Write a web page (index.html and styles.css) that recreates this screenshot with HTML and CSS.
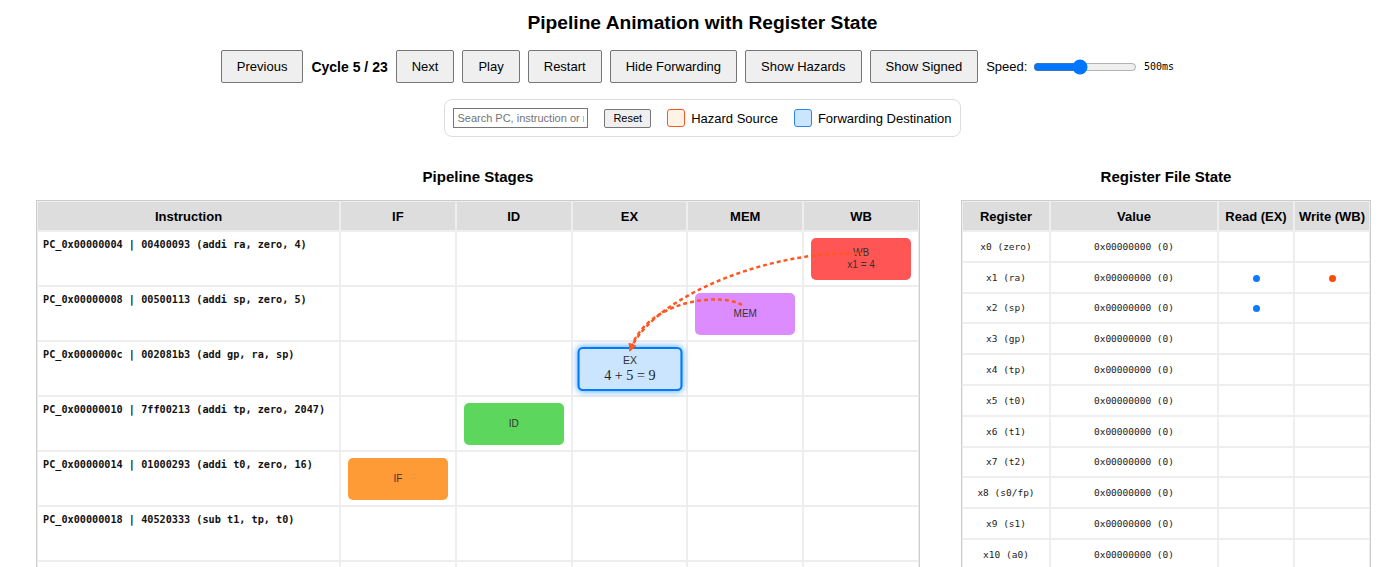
FILE: index.html
```html
<!DOCTYPE html>
<html lang="en">
<head>
<meta charset="utf-8">
<title>Pipeline Animation with Register State</title>
<link rel="stylesheet" href="styles.css">
</head>
<body>
<h1 class="title">Pipeline Animation with Register State</h1>

<div class="controls">
  <button class="btn">Previous</button>
  <span class="cycle">Cycle 5 / 23</span>
  <button class="btn">Next</button>
  <button class="btn">Play</button>
  <button class="btn">Restart</button>
  <button class="btn">Hide Forwarding</button>
  <button class="btn">Show Hazards</button>
  <button class="btn">Show Signed</button>
  <label class="speed">Speed: <input class="speed-range" type="range" min="100" max="1000" value="500"><span class="speed-val">500ms</span></label>
</div>

<div class="legend-row">
  <div class="legend">
    <input class="search" type="text" placeholder="Search PC, instruction or register">
    <button class="reset">Reset</button>
    <span class="legend-item"><span class="swatch swatch-hazard"></span>Hazard Source</span>
    <span class="legend-item"><span class="swatch swatch-fwd"></span>Forwarding Destination</span>
  </div>
</div>

<div class="main">
  <section class="pipeline">
    <h2 class="section-title">Pipeline Stages</h2>
    <div class="table-wrap">
      <table class="grid pipe-grid">
        <thead>
          <tr>
            <th class="col-instr">Instruction</th>
            <th>IF</th>
            <th>ID</th>
            <th>EX</th>
            <th>MEM</th>
            <th>WB</th>
          </tr>
        </thead>
        <tbody>
          <tr>
            <td class="instr">PC_0x00000004 | 00400093 (addi ra, zero, 4)</td>
            <td></td><td></td><td></td><td></td>
            <td><div class="stage stage-wb"><span>WB</span><span>x1 = 4</span></div></td>
          </tr>
          <tr>
            <td class="instr">PC_0x00000008 | 00500113 (addi sp, zero, 5)</td>
            <td></td><td></td><td></td>
            <td><div class="stage stage-mem"><span>MEM</span></div></td>
            <td></td>
          </tr>
          <tr>
            <td class="instr">PC_0x0000000c | 002081b3 (add gp, ra, sp)</td>
            <td></td><td></td>
            <td><div class="stage stage-ex"><span>EX</span><span class="calc">4 + 5 = 9</span></div></td>
            <td></td><td></td>
          </tr>
          <tr>
            <td class="instr">PC_0x00000010 | 7ff00213 (addi tp, zero, 2047)</td>
            <td></td>
            <td><div class="stage stage-id"><span>ID</span></div></td>
            <td></td><td></td><td></td>
          </tr>
          <tr>
            <td class="instr">PC_0x00000014 | 01000293 (addi t0, zero, 16)</td>
            <td><div class="stage stage-if"><span>IF</span></div></td>
            <td></td><td></td><td></td><td></td>
          </tr>
          <tr>
            <td class="instr">PC_0x00000018 | 40520333 (sub t1, tp, t0)</td>
            <td></td><td></td><td></td><td></td><td></td>
          </tr>
          <tr>
            <td class="instr">PC_0x0000001c | 00628393 (addi t2, t0, 6)</td>
            <td></td><td></td><td></td><td></td><td></td>
          </tr>
        </tbody>
      </table>
      <svg class="fwd" width="884" height="380" viewBox="0 0 884 380" aria-hidden="true">
        <defs>
          <marker id="arrow" markerWidth="8" markerHeight="8" refX="4" refY="4" orient="auto" markerUnits="userSpaceOnUse">
            <path d="M0,0 L8,4 L0,8 Z" fill="#ff5722"/>
          </marker>
        </defs>
        <path d="M 828 54 C 744 48, 622 92, 595 148" fill="none" stroke="#ff5722" stroke-width="2.5" stroke-dasharray="4 3" marker-end="url(#arrow)"/>
        <path d="M 706 105 C 684 92, 612 100, 595 148" fill="none" stroke="#ff5722" stroke-width="2.5" stroke-dasharray="4 3" marker-end="url(#arrow)"/>
      </svg>
    </div>
  </section>

  <section class="registers">
    <h2 class="section-title">Register File State</h2>
    <table class="grid reg-grid">
      <thead>
        <tr>
          <th class="col-reg">Register</th>
          <th class="col-val">Value</th>
          <th class="col-rw">Read (EX)</th>
          <th class="col-rw">Write (WB)</th>
        </tr>
      </thead>
      <tbody>
        <tr><td>x0 (zero)</td><td>0x00000000 (0)</td><td></td><td></td></tr>
        <tr><td>x1 (ra)</td><td>0x00000000 (0)</td><td><span class="dot dot-read"></span></td><td><span class="dot dot-write"></span></td></tr>
        <tr><td>x2 (sp)</td><td>0x00000000 (0)</td><td><span class="dot dot-read"></span></td><td></td></tr>
        <tr><td>x3 (gp)</td><td>0x00000000 (0)</td><td></td><td></td></tr>
        <tr><td>x4 (tp)</td><td>0x00000000 (0)</td><td></td><td></td></tr>
        <tr><td>x5 (t0)</td><td>0x00000000 (0)</td><td></td><td></td></tr>
        <tr><td>x6 (t1)</td><td>0x00000000 (0)</td><td></td><td></td></tr>
        <tr><td>x7 (t2)</td><td>0x00000000 (0)</td><td></td><td></td></tr>
        <tr><td>x8 (s0/fp)</td><td>0x00000000 (0)</td><td></td><td></td></tr>
        <tr><td>x9 (s1)</td><td>0x00000000 (0)</td><td></td><td></td></tr>
        <tr><td>x10 (a0)</td><td>0x00000000 (0)</td><td></td><td></td></tr>
        <tr><td>x11 (a1)</td><td>0x00000000 (0)</td><td></td><td></td></tr>
        <tr><td>x12 (a2)</td><td>0x00000000 (0)</td><td></td><td></td></tr>
        <tr><td>x13 (a3)</td><td>0x00000000 (0)</td><td></td><td></td></tr>
        <tr><td>x14 (a4)</td><td>0x00000000 (0)</td><td></td><td></td></tr>
        <tr><td>x15 (a5)</td><td>0x00000000 (0)</td><td></td><td></td></tr>
      </tbody>
    </table>
  </section>
</div>
</body>
</html>
```

FILE: styles.css
```css
* { box-sizing: border-box; }

body {
  margin: 0;
  background: #fff;
  color: #000;
  font-family: "Liberation Sans", Arial, sans-serif;
}

.title {
  margin: 11px 0 0;
  padding-left: 12px;
  font-size: 19.2px;
  line-height: 23px;
  font-weight: bold;
  text-align: center;
}

.controls {
  display: flex;
  justify-content: center;
  align-items: center;
  gap: 8px;
  margin-top: 16px;
  padding-left: 2px;
}

.btn {
  font-family: "Liberation Sans", Arial, sans-serif;
  font-size: 13px;
  line-height: 15px;
  padding: 8px 15px;
  height: 33px;
  background: #efefef;
  color: #000;
  border: 1px solid #767676;
  border-radius: 2px;
}

.cycle {
  font-size: 14px;
  font-weight: bold;
}

.speed {
  display: flex;
  align-items: center;
  font-size: 13px;
  white-space: pre;
}

.speed-range {
  width: 104px;
  margin: 0 2px;
  accent-color: #0075ff;
}

.speed-val {
  margin-left: 5px;
  font-family: "DejaVu Sans Mono", monospace;
  font-size: 10px;
}

.legend-row {
  display: flex;
  justify-content: center;
  margin-top: 16px;
  padding-left: 12px;
}

.legend {
  display: flex;
  align-items: center;
  gap: 16px;
  padding: 8px;
  border: 1px solid #ddd;
  border-radius: 8px;
}

.search {
  width: 135px;
  height: 20px;
  padding: 1px 3px;
  font-family: "Liberation Sans", Arial, sans-serif;
  font-size: 11px;
  border: 1px solid #767676;
  border-radius: 0;
}

.reset {
  height: 19px;
  padding: 1px 8px;
  font-family: "Liberation Sans", Arial, sans-serif;
  font-size: 11px;
  line-height: 13px;
  background: #efefef;
  color: #000;
  border: 1px solid #767676;
  border-radius: 2px;
}

.legend-item {
  display: flex;
  align-items: center;
  gap: 6px;
  font-size: 13px;
}

.swatch {
  width: 18px;
  height: 18px;
  border-radius: 3px;
}

.swatch-hazard {
  background: #fff3e6;
  border: 1px solid #ff5722;
}

.swatch-fwd {
  background: #cce5ff;
  border: 1px solid #2b86f0;
}

.main {
  display: flex;
  align-items: flex-start;
  gap: 41px;
  margin-top: 31px;
  padding-left: 36px;
}

.pipeline { width: 884px; flex: none; }
.registers { width: 410px; flex: none; }

.section-title {
  margin: 0 0 14px;
  font-size: 15px;
  line-height: 18px;
  text-align: center;
}

.table-wrap { position: relative; }

.grid {
  width: 100%;
  table-layout: fixed;
  border-collapse: separate;
  border-spacing: 0;
  border: 1px solid #ccc;
}

.grid th,
.grid td {
  border: 1px solid #eee;
}

.grid th {
  height: 30px;
  padding: 0 2px;
  background: #ddd;
  font-size: 13px;
  font-weight: bold;
  text-align: center;
  vertical-align: middle;
  white-space: nowrap;
}

.col-instr { width: 303px; }

.pipe-grid tbody tr { height: 55px; }

.pipe-grid td {
  padding: 6px 7px 5px;
  vertical-align: top;
}

.pipe-grid td.instr {
  padding: 6px 5px;
  font-family: "DejaVu Sans Mono", monospace;
  font-size: 10.2px;
  line-height: 13px;
  font-weight: bold;
  color: #111;
  white-space: nowrap;
}

.stage {
  height: 42px;
  border-radius: 5px;
  display: flex;
  flex-direction: column;
  align-items: center;
  justify-content: center;
  font-size: 10px;
  line-height: 12px;
  color: #333;
}

.stage-if { background: #ff9b37; }
.stage-id { background: #5cd65c; }
.stage-mem { background: #dd8cff; }
.stage-wb { background: #ff5555; }

.stage-ex {
  background: #cce5ff;
  border: 2px solid #007bff;
  box-shadow: 0 0 6px rgba(0, 123, 255, 0.6);
  transform: scale(1.05);
}

.calc {
  font-family: "Liberation Serif", serif;
  font-size: 13.5px;
  line-height: 16px;
  color: #222;
}

.fwd {
  position: absolute;
  left: 0;
  top: 0;
  overflow: visible;
  pointer-events: none;
}

.col-reg { width: 88px; }
.col-val { width: 168px; }
.col-rw { width: 76px; }

.reg-grid tbody tr { height: 30.8px; }

.reg-grid td {
  padding: 0 4px;
  text-align: center;
  vertical-align: middle;
  font-family: "DejaVu Sans Mono", monospace;
  font-size: 9.5px;
  line-height: 13px;
  color: #222;
  white-space: nowrap;
}

.dot {
  display: inline-block;
  width: 7px;
  height: 7px;
  border-radius: 50%;
  vertical-align: middle;
}

.dot-read { background: #0d7bff; }
.dot-write { background: #ff4a0a; }
```
